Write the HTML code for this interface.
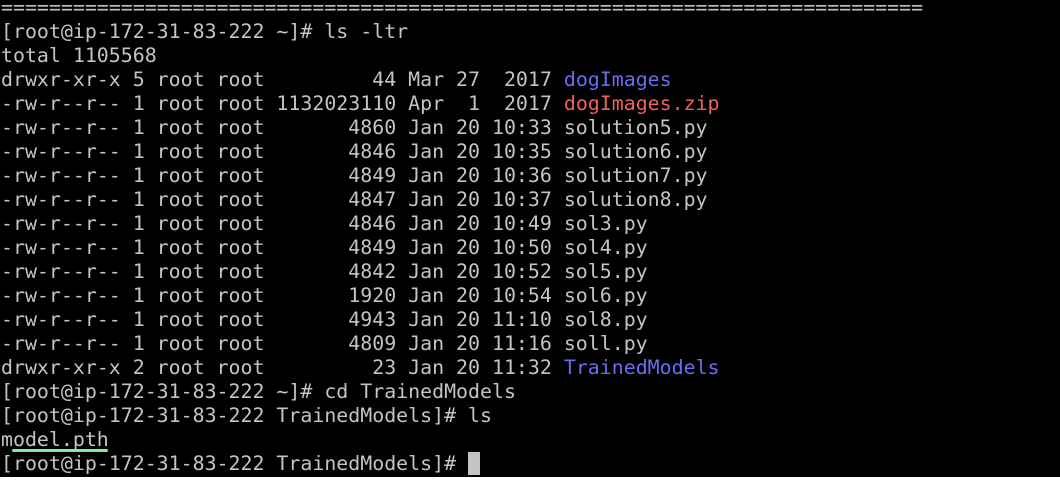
<!DOCTYPE html>
<html><head><meta charset="utf-8"><style>
html,body{margin:0;padding:0;background:#fff;width:1060px;height:491px;overflow:hidden}
#t{position:absolute;left:0;top:0;width:1060px;height:477px;background:#000}
pre{position:absolute;left:1px;top:-4px;margin:0;font-family:"DejaVu Sans Mono","Liberation Mono",monospace;font-size:19.9px;line-height:24px;color:#c4c4c4;white-space:pre}
.b{color:#6b6bef}.r{color:#f06060}
#u{position:absolute;left:12px;top:449px;width:96px;height:3px;background:#80ebaa;border-radius:2px}
#c{position:absolute;left:468px;top:452px;width:12px;height:23px;background:#c4c4c4}
</style></head><body><div id="t">
<pre>=============================================================================
[root@ip-172-31-83-222 ~]# ls -ltr
total 1105568
drwxr-xr-x 5 root root         44 Mar 27  2017 <span class="b">dogImages</span>
-rw-r--r-- 1 root root 1132023110 Apr  1  2017 <span class="r">dogImages.zip</span>
-rw-r--r-- 1 root root       4860 Jan 20 10:33 solution5.py
-rw-r--r-- 1 root root       4846 Jan 20 10:35 solution6.py
-rw-r--r-- 1 root root       4849 Jan 20 10:36 solution7.py
-rw-r--r-- 1 root root       4847 Jan 20 10:37 solution8.py
-rw-r--r-- 1 root root       4846 Jan 20 10:49 sol3.py
-rw-r--r-- 1 root root       4849 Jan 20 10:50 sol4.py
-rw-r--r-- 1 root root       4842 Jan 20 10:52 sol5.py
-rw-r--r-- 1 root root       1920 Jan 20 10:54 sol6.py
-rw-r--r-- 1 root root       4943 Jan 20 11:10 sol8.py
-rw-r--r-- 1 root root       4809 Jan 20 11:16 soll.py
drwxr-xr-x 2 root root         23 Jan 20 11:32 <span class="b">TrainedModels</span>
[root@ip-172-31-83-222 ~]# cd TrainedModels
[root@ip-172-31-83-222 TrainedModels]# ls
model.pth
[root@ip-172-31-83-222 TrainedModels]# </pre>
<div id="u"></div><div id="c"></div>
</div></body></html>
